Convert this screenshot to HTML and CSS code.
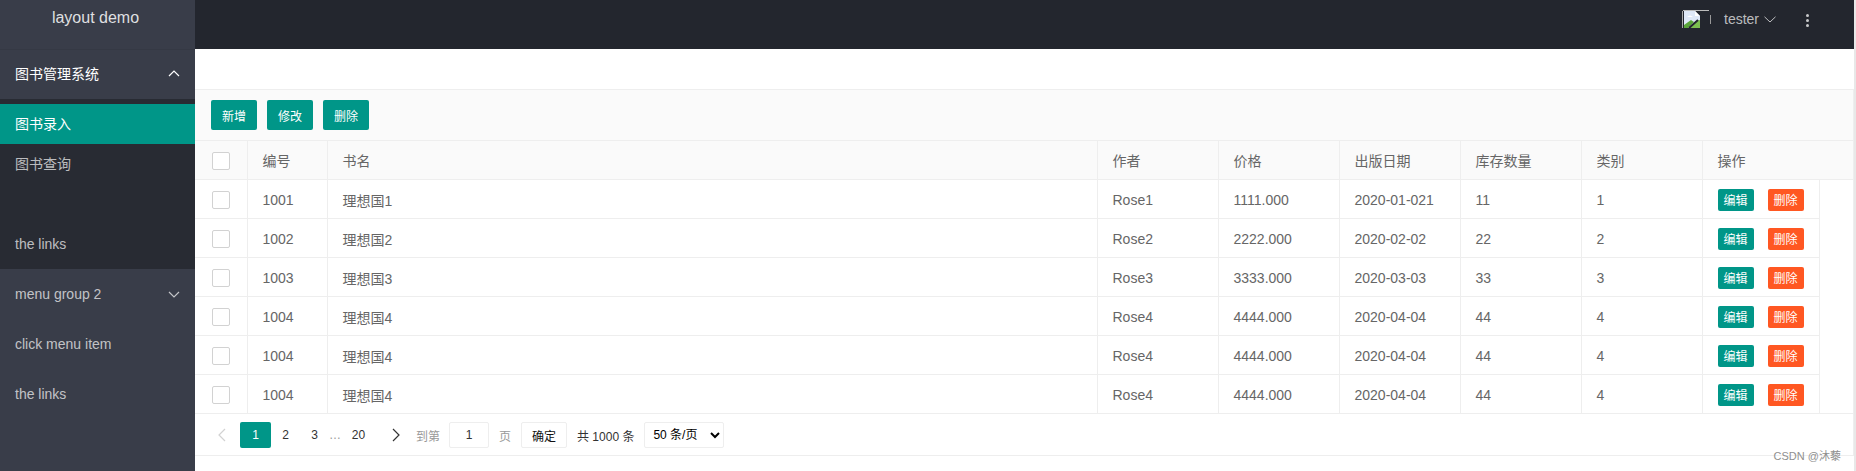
FILE: index.html
```html
<!DOCTYPE html>
<html lang="zh-CN">
<head>
<meta charset="utf-8">
<title>layout demo</title>
<link rel="stylesheet" href="styles.css">
</head>
<body>
<div class="app">
  <aside class="side">
    <div class="logo">layout demo</div>
    <nav>
      <a class="group open cjk">图书管理系统<svg class="chev" viewBox="0 0 12 7"><path d="M1 6 6 1l5 5"/></svg></a>
      <div class="sub">
        <a class="item active cjk">图书录入</a>
        <a class="item cjk">图书查询</a>
        <a class="item"></a>
        <a class="item">the links</a>
      </div>
      <a class="group">menu group 2<svg class="chev" viewBox="0 0 12 7"><path d="M1 1l5 5 5-5"/></svg></a>
      <a class="group">click menu item</a>
      <a class="group">the links</a>
    </nav>
  </aside>
  <main class="main">
    <header class="top">
      <span class="avatar">
        <svg width="22" height="19" viewBox="0 0 22 19"><rect x="0" y="1" width="1" height="17" fill="#aaa"/><path d="M1 0h26" stroke="#bbb" transform="translate(0 .5)"/><path d="M2 1h11l5 5v12H2z" fill="#dfe8f7"/><path d="M13 1l5 5h-5z" fill="#fff"/><path d="M5 7q3-3 6 0z" fill="#fff"/><path d="M2 18v-3l7-5 3 2-6 6z" fill="#5aa53a"/><path d="M6 18l8-7 4-1v8z" fill="#7cbf50"/><path d="M7 18l9-8" stroke="#22252e" stroke-width="2"/></svg>
        <i class="avatar-tick"></i>
      </span>
      <span class="user">tester<svg class="user-chev" viewBox="0 0 12 7"><path d="M.5 .8 6 6l5.500-5.200"/></svg></span>
      <span class="dots"><i></i><i></i><i></i></span>
    </header>
    <section class="content">
      <div class="spacer"></div>
      <div class="panel">
        <div class="toolbar">
          <button class="btn">新增</button>
          <button class="btn">修改</button>
          <button class="btn">删除</button>
        </div>
        <table class="grid">
          <colgroup>
            <col class="c-check"><col class="c-id"><col class="c-name"><col class="c-std"><col class="c-std"><col class="c-std"><col class="c-std"><col class="c-std"><col class="c-op"><col>
          </colgroup>
          <thead>
            <tr><th class="chk"><span class="box"></span></th><th>编号</th><th>书名</th><th>作者</th><th>价格</th><th>出版日期</th><th>库存数量</th><th>类别</th><th colspan="2" class="end">操作</th></tr>
          </thead>
          <tbody>
            <tr><td class="chk"><span class="box"></span></td><td>1001</td><td>理想国1</td><td>Rose1</td><td>1111.000</td><td>2020-01-021</td><td>11</td><td>1</td><td class="ops"><button class="mini">编辑</button><button class="mini danger">删除</button></td><td class="fill"></td></tr>
            <tr><td class="chk"><span class="box"></span></td><td>1002</td><td>理想国2</td><td>Rose2</td><td>2222.000</td><td>2020-02-02</td><td>22</td><td>2</td><td class="ops"><button class="mini">编辑</button><button class="mini danger">删除</button></td><td class="fill"></td></tr>
            <tr><td class="chk"><span class="box"></span></td><td>1003</td><td>理想国3</td><td>Rose3</td><td>3333.000</td><td>2020-03-03</td><td>33</td><td>3</td><td class="ops"><button class="mini">编辑</button><button class="mini danger">删除</button></td><td class="fill"></td></tr>
            <tr><td class="chk"><span class="box"></span></td><td>1004</td><td>理想国4</td><td>Rose4</td><td>4444.000</td><td>2020-04-04</td><td>44</td><td>4</td><td class="ops"><button class="mini">编辑</button><button class="mini danger">删除</button></td><td class="fill"></td></tr>
            <tr><td class="chk"><span class="box"></span></td><td>1004</td><td>理想国4</td><td>Rose4</td><td>4444.000</td><td>2020-04-04</td><td>44</td><td>4</td><td class="ops"><button class="mini">编辑</button><button class="mini danger">删除</button></td><td class="fill"></td></tr>
            <tr><td class="chk"><span class="box"></span></td><td>1004</td><td>理想国4</td><td>Rose4</td><td>4444.000</td><td>2020-04-04</td><td>44</td><td>4</td><td class="ops"><button class="mini">编辑</button><button class="mini danger">删除</button></td><td class="fill"></td></tr>
          </tbody>
        </table>
        <div class="pager">
          <svg class="arrow prev" viewBox="0 0 9 14"><path d="M8 1 2 7l6 6"/></svg>
          <span class="page cur">1</span>
          <span class="page">2</span>
          <span class="page">3</span>
          <span class="ell">…</span>
          <span class="page last">20</span>
          <svg class="arrow next" viewBox="0 0 9 14"><path d="M1 1l6 6-6 6"/></svg>
          <span class="goto">到第</span>
          <input class="num" value="1">
          <span class="goto pg">页</span>
          <button class="ok">确定</button>
          <span class="total">共 1000 条</span>
          <select class="size"><option>50 条/页</option></select>
        </div>
      </div>
    </section>
    <span class="mark">CSDN @沐藜</span>
  </main>
</div>
</body>
</html>
```

FILE: styles.css
```css
* { box-sizing: border-box; }
html, body { margin: 0; height: 100%; background: #fff; overflow: hidden; }
body {
  font-family: "Liberation Sans", "Noto Sans CJK SC", sans-serif;
  font-size: 14px;
  color: #666;
}
.app { display: flex; height: 471px; border-right: 2px solid #e8e8e8; }

/* sidebar */
.side { width: 195px; flex: none; background: #393d49; color: rgba(255,255,255,.7); }
.logo {
  height: 49px;
  padding: 7px 4px 0 0;
  line-height: 22px;
  text-align: center;
  font-size: 16px;
  color: rgba(255,255,255,.85);
  box-shadow: 0 1px 0 rgba(0,0,0,.06);
}
.group {
  display: flex;
  align-items: center;
  justify-content: space-between;
  height: 50px;
  padding: 0 15px;
}
.group.open { color: #fff; }
.chev { width: 12px; height: 7px; fill: none; stroke: currentColor; stroke-width: 1.2; }
.sub { padding: 5px 0; background: #282b33; }
.item { display: flex; align-items: center; height: 40px; padding: 0 15px; }
.item.active { background: #009688; color: #fff; }
.cjk { padding-bottom: 2px; }

/* top bar */
.main { flex: 1; min-width: 0; position: relative; }
.top {
  display: flex;
  align-items: flex-start;
  height: 49px;
  background: #23262e;
  color: rgba(255,255,255,.7);
}
.avatar { display: flex; align-items: flex-start; margin-left: 1487px; margin-top: 10px; width: 30px; }
.avatar svg { overflow: visible; flex: none; }
.avatar-tick { display: block; width: 1px; height: 9px; margin: 5px 0 0 6px; background: #999; }
.user { display: flex; align-items: center; margin-left: 12px; margin-top: 9px; line-height: 20px; }
.user-chev { width: 12px; height: 7px; margin-left: 5px; fill: none; stroke: currentColor; stroke-width: 1; }
.dots { display: flex; flex-direction: column; gap: 2px; margin-left: 30px; margin-top: 14px; }
.dots i { width: 3px; height: 3px; border-radius: 50%; background: rgba(255,255,255,.75); }

/* content */
.spacer { height: 40px; }
.panel { width: 1659px; border-top: 1px solid #eee; border-right: 1px solid #eee; }
.toolbar {
  display: flex;
  gap: 10px;
  height: 50px;
  padding: 10px 16px;
  background: #fafafa;
}
.btn, .mini {
  border: 0;
  padding: 0;
  color: #fff;
  background: #009688;
  border-radius: 2px;
  font: 12px "Liberation Sans", "Noto Sans CJK SC", sans-serif;
}
.btn { width: 46px; height: 30px; }
.grid { width: 1658px; table-layout: fixed; border-collapse: collapse; border-top: 1px solid #eee; border-bottom: 1px solid #eee; }
.c-check { width: 52px; }
.c-id { width: 80px; }
.c-name { width: 770px; }
.c-std { width: 121px; }
.c-op { width: 117px; }
th, td {
  height: 39px;
  padding: 0 15px;
  border: 1px solid #eee;
  border-left: 0;
  text-align: left;
  font-weight: 400;
  white-space: nowrap;
}
td { padding-top: 1px; }
thead tr { background: #fafafa; }
th.end { border-right: 0; }
td:first-child, th:first-child { padding-left: 17px; }
.fill { border: 0; }
.chk { padding-right: 0; padding-top: 2px; }
.box {
  display: block;
  width: 18px;
  height: 18px;
  background: #fff;
  border: 1px solid #d2d2d2;
  border-radius: 2px;
}
.ops { padding-right: 0; }
.mini { display: inline-block; width: 36px; height: 22px; vertical-align: middle; }
.danger { background: #ff5722; margin-left: 14px; }
.panel tbody tr:last-child td { border-bottom: 0; }

/* pager */
.pager {
  display: flex;
  align-items: center;
  height: 42px;
  padding-top: 1px;
  border-bottom: 1px solid #eee;
  font-size: 12px;
}
.arrow { width: 9px; height: 14px; flex: none; fill: none; stroke: #333; stroke-width: 1.2; }
.prev { margin-left: 22px; stroke: #d2d2d2; }
.page { display: block; color: #333; text-align: center; width: 29px; line-height: 26px; }
.cur { width: 31px; margin-left: 14px; background: #009688; color: #fff; border-radius: 2px; height: 26px; }
.ell { color: #999; }
.last { margin-left: 3px; }
.next { margin-left: 19px; }
.goto { color: #999; margin-left: 15px; }
.num {
  width: 40px;
  height: 26px;
  margin-left: 9px;
  border: 1px solid #eee;
  border-radius: 2px;
  text-align: center;
  font: 12px "Liberation Sans", sans-serif;
  color: #333;
  background: #fff;
  padding: 0;
}
.pg { margin-left: 10px; }
.ok {
  width: 46px;
  height: 26px;
  margin-left: 10px;
  border: 1px solid #eee;
  border-radius: 2px;
  background: #fff;
  color: #111;
  padding: 0;
  font: 12px "Liberation Sans", "Noto Sans CJK SC", sans-serif;
}
.total { margin-left: 10px; color: #333; }
.size {
  width: 80px;
  height: 26px;
  margin-left: 10px;
  border: 1px solid #eee;
  border-radius: 2px;
  background: #fff;
  color: #000;
  font: 12px "Liberation Sans", "Noto Sans CJK SC", sans-serif;
  padding: 0 0 0 4px;
}
.mark {
  position: absolute;
  right: 13px;
  top: 448px;
  font-size: 11px;
  line-height: 16px;
  color: #8f8f8f;
}
```
